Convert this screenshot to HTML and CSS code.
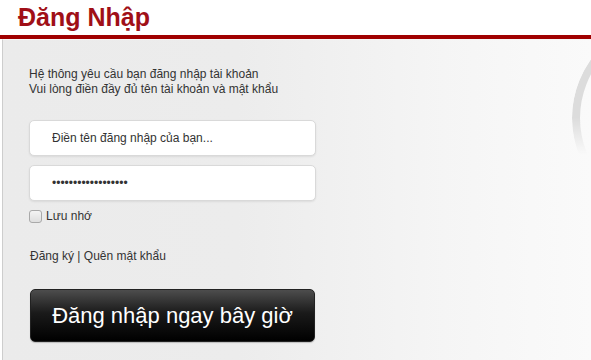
FILE: index.html
```html
<!DOCTYPE html>
<html>
<head>
    <meta charset="UTF-8">
    <title>Đăng Nhập</title>
    <link rel="stylesheet" href="styles.css">
</head>
<body>
    <header class="title-bar">
        <h1>Đăng Nhập</h1>
    </header>

    <div class="panel">
        <div class="ring"></div>

        <p class="intro">
            Hệ thông yêu cầu bạn đăng nhập tài khoản<br>
            Vui lòng điền đầy đủ tên tài khoản và mật khẩu
        </p>

        <form class="login-form">
            <input class="field" type="text" placeholder="Điền tên đăng nhập của bạn...">
            <input class="field" type="password" value="123456789012345678">

            <label class="remember">
                <input type="checkbox"> Lưu nhớ
            </label>

            <p class="links">
                <a href="#">Đăng ký</a> | <a href="#">Quên mật khẩu</a>
            </p>

            <button class="btn-login" type="button">Đăng nhập ngay bây giờ</button>
        </form>
    </div>
</body>
</html>
```

FILE: styles.css
```css
:root {
    --primary-color: #a00f17;
    --bar-color: #a00000;
    --text-color: #333333;
    --border-color: #d9d9d9;
}

body {
    font-family: "Liberation Sans", Arial, sans-serif;
    margin: 0;
    background-color: white;
    overflow: hidden;
}

.title-bar {
    height: 35px;
    border-bottom: 4px solid var(--bar-color);
}

.title-bar h1 {
    margin: 0;
    padding-left: 18px;
    font-size: 25px;
    line-height: 35px;
    color: var(--primary-color);
}

.panel {
    position: relative;
    overflow: hidden;
    height: 330px;
    margin-left: 2px;
    padding: 27px 0 0 26px;
    border-left: 1px solid #cdcdcd;
    border-top: 1px solid #f6f6f6;
    background: linear-gradient(to right, #ebebeb 0%, #ececec 40%, #f5f5f5 75%, #fafafa 100%);
    box-sizing: border-box;
}

.ring {
    position: absolute;
    left: 569px;
    top: -22px;
    width: 200px;
    height: 200px;
    border: 8px solid #dcdcdc;
    border-radius: 50%;
    box-sizing: border-box;
    -webkit-mask-image: linear-gradient(to bottom, black 0%, black 50%, transparent 68%);
    mask-image: linear-gradient(to bottom, black 0%, black 50%, transparent 68%);
}

.intro {
    margin: 0;
    font-size: 12px;
    line-height: 15px;
    color: var(--text-color);
}

.login-form {
    display: flex;
    flex-direction: column;
    align-items: flex-start;
    margin-top: 23px;
}

.field {
    width: 287px;
    height: 36px;
    margin: 0 0 9px 0;
    padding: 0 10px 0 22px;
    border: 1px solid var(--border-color);
    border-radius: 5px;
    box-shadow: 0 1px 2px rgba(0, 0, 0, 0.08);
    background-color: white;
    font-family: "Liberation Sans", Arial, sans-serif;
    font-size: 12px;
    color: var(--text-color);
    box-sizing: border-box;
    outline: none;
}

.field::placeholder {
    color: var(--text-color);
}

.remember {
    display: flex;
    align-items: center;
    gap: 4px;
    margin-top: -1px;
    font-size: 12px;
    color: var(--text-color);
}

.remember input {
    appearance: none;
    -webkit-appearance: none;
    width: 13px;
    height: 13px;
    margin: 0;
    border: 1px solid #a9a9a9;
    border-radius: 3px;
    background: linear-gradient(to bottom, #f4f4f4, #dedede);
}

.links {
    margin: 26px 0 0 1px;
    font-size: 12px;
    color: var(--text-color);
}

.links a {
    color: var(--text-color);
    text-decoration: none;
}

.btn-login {
    width: 285px;
    height: 53px;
    margin: 26px 0 0 1px;
    border: 1px solid #222;
    border-radius: 5px;
    background: linear-gradient(to bottom, #4d4d4d 0%, #1a1a1a 45%, #000000 100%);
    box-shadow: 0 1px 1px rgba(0, 0, 0, 0.2);
    font-family: "Liberation Sans", Arial, sans-serif;
    font-size: 22px;
    color: white;
    cursor: pointer;
}
```
